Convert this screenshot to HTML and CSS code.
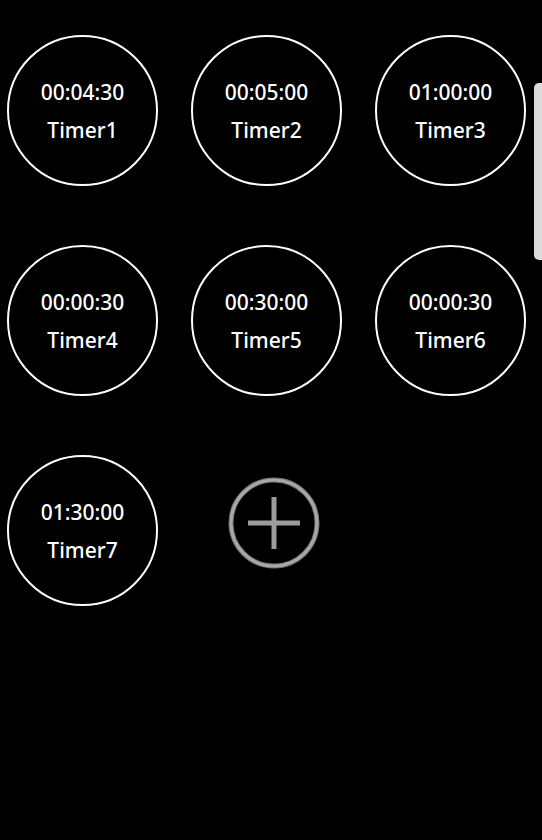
FILE: index.html
```html
<!DOCTYPE html>
<html>
<head>
<meta charset="utf-8">
<link rel="stylesheet" href="styles.css">
</head>
<body>
<div class="grid">
  <div class="timer"><span class="time">00:04:30</span><span class="name">Timer1</span></div>
  <div class="timer"><span class="time">00:05:00</span><span class="name">Timer2</span></div>
  <div class="timer"><span class="time">01:00:00</span><span class="name">Timer3</span></div>
  <div class="timer"><span class="time">00:00:30</span><span class="name">Timer4</span></div>
  <div class="timer"><span class="time">00:30:00</span><span class="name">Timer5</span></div>
  <div class="timer"><span class="time">00:00:30</span><span class="name">Timer6</span></div>
  <div class="timer"><span class="time">01:30:00</span><span class="name">Timer7</span></div>
  <div class="add">
    <svg width="92" height="92" viewBox="0 0 92 92">
      <circle cx="46" cy="46" r="43" fill="none" stroke="#6f6f6f" stroke-width="5"/>
      <circle cx="46" cy="46" r="43" fill="none" stroke="#a8a8a8" stroke-width="3"/>
      <line x1="20" y1="46" x2="72" y2="46" stroke="#9c9c9c" stroke-width="5"/>
      <line x1="46" y1="20" x2="46" y2="72" stroke="#9c9c9c" stroke-width="5"/>
    </svg>
  </div>
</div>
<div class="scrollbar"></div>
</body>
</html>
```
FILE: styles.css
```css
html, body {
  margin: 0;
  background: #000;
  height: 100%;
}
body {
  font-family: "Noto Sans", "Open Sans", sans-serif;
  color: #fff;
  overflow: hidden;
}
.grid {
  display: grid;
  grid-template-columns: repeat(3, 151px);
  column-gap: 33px;
  row-gap: 59px;
  padding: 35px 0 0 7px;
}
.timer {
  width: 151px;
  height: 151px;
  box-sizing: border-box;
  border: 2px solid #fff;
  border-radius: 50%;
  display: flex;
  flex-direction: column;
  align-items: center;
  justify-content: center;
}
.time, .name {
  font-size: 21px;
  font-weight: 500;
  line-height: 38px;
  letter-spacing: 0;
}
.add {
  margin: 22px 0 0 37px;
  width: 92px;
  height: 92px;
}
.add svg {
  display: block;
}
.scrollbar {
  position: absolute;
  right: 0;
  top: 83px;
  width: 8px;
  height: 177px;
  background: #dcdcdc;
  border-radius: 5px 0 0 5px;
}
```
